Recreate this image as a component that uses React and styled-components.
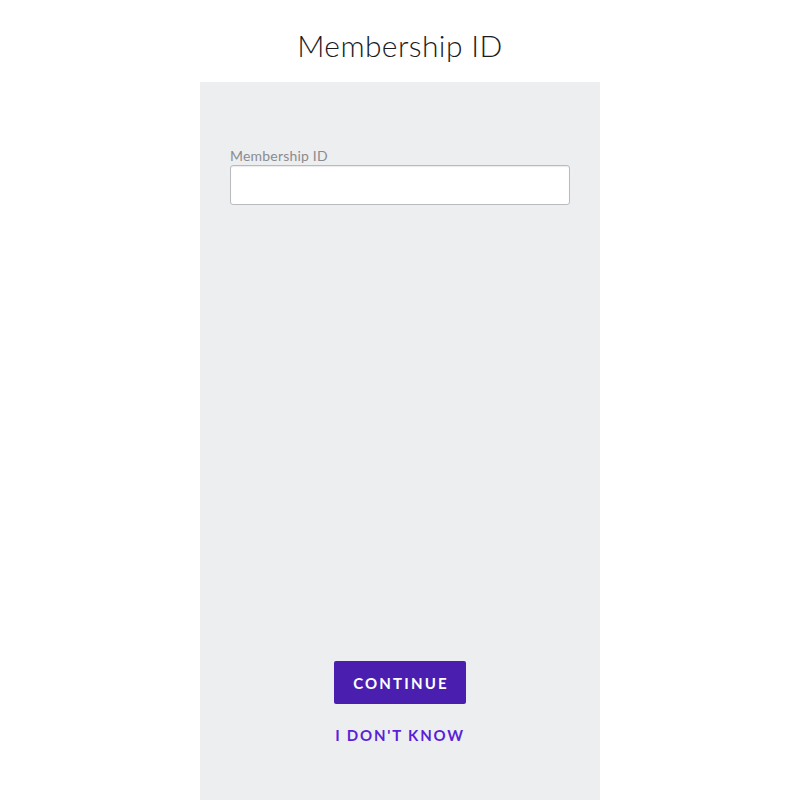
import React from "react";
import styled, { createGlobalStyle } from "styled-components";

const Global = createGlobalStyle`
  html, body { margin: 0; padding: 0; background: #ffffff; }
  body { font-family: "Lato", "Noto Sans", sans-serif; }
  #root { width: 800px; height: 800px; }
`;

const Page = styled.div`
  width: 800px;
  height: 800px;
  display: flex;
  flex-direction: column;
  align-items: center;
  overflow: hidden;
`;

const Title = styled.h1`
  margin: 0;
  height: 82px;
  display: flex;
  align-items: center;
  justify-content: center;
  font-family: "Lato", sans-serif;
  font-weight: 300;
  font-size: 30px;
  color: #1b1b1f;
  letter-spacing: 0.4px;
  padding-top: 8px;
  box-sizing: border-box;
`;

const Panel = styled.main`
  width: 400px;
  flex: 1;
  background: #edeef0;
  box-sizing: border-box;
  padding: 66px 30px 0;
  display: flex;
  flex-direction: column;
`;

const Field = styled.label`
  display: flex;
  flex-direction: column;
  gap: 1px;
`;

const Label = styled.span`
  font-family: "Lato", sans-serif;
  font-size: 14px;
  color: #8a8b8f;
  letter-spacing: 0.2px;
  line-height: 16px;
`;

const Input = styled.input`
  height: 40px;
  box-sizing: border-box;
  border: 1px solid #b9babd;
  border-radius: 3px;
  background: #ffffff;
  box-shadow: inset 0 1px 1px rgba(0, 0, 0, 0.08);
  font-size: 15px;
  padding: 0 10px;
  outline: none;
`;

const Actions = styled.div`
  margin-top: auto;
  margin-bottom: 56px;
  display: flex;
  flex-direction: column;
  align-items: center;
  gap: 22px;
`;

const PrimaryButton = styled.button`
  width: 132px;
  height: 43px;
  border: none;
  border-radius: 2px;
  background: #4a1fb0;
  color: #ffffff;
  font-family: "Lato", sans-serif;
  font-weight: 700;
  font-size: 15px;
  letter-spacing: 2.2px;
  padding: 0 0 0 2px;
  cursor: pointer;
`;

const LinkButton = styled.button`
  border: none;
  background: none;
  padding: 0;
  color: #5a1fd8;
  font-family: "Lato", sans-serif;
  font-weight: 700;
  font-size: 15px;
  letter-spacing: 1.8px;
  cursor: pointer;
`;

export default function App() {
  return (
    <>
      <Global />
      <Page>
        <Title>Membership ID</Title>
        <Panel>
          <Field>
            <Label>Membership ID</Label>
            <Input type="text" />
          </Field>
          <Actions>
            <PrimaryButton>CONTINUE</PrimaryButton>
            <LinkButton>I DON'T KNOW</LinkButton>
          </Actions>
        </Panel>
      </Page>
    </>
  );
}
